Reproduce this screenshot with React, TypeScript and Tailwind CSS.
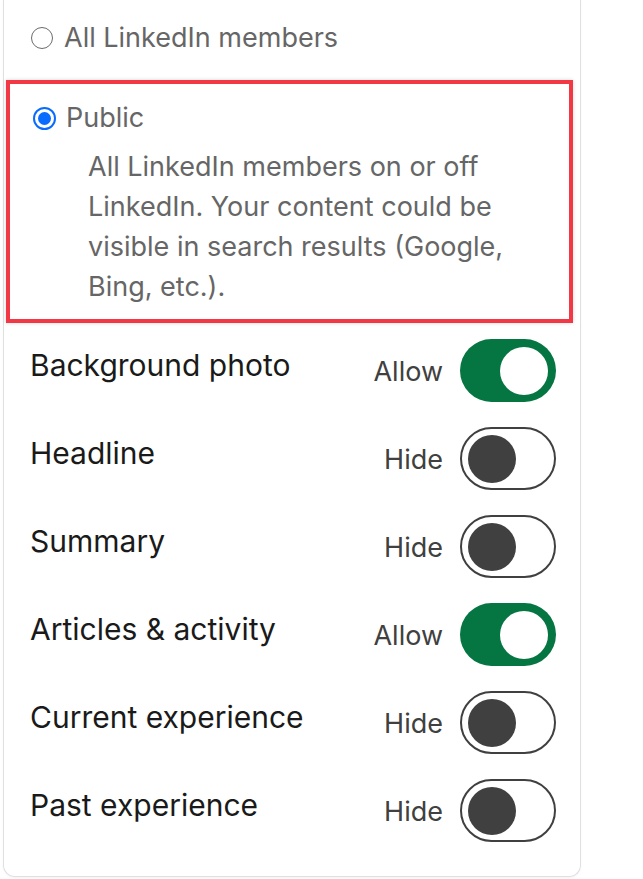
import React from "react";

type Row = { label: string; on: boolean };

const rows: Row[] = [
  { label: "Background photo", on: true },
  { label: "Headline", on: false },
  { label: "Summary", on: false },
  { label: "Articles & activity", on: true },
  { label: "Current experience", on: false },
  { label: "Past experience", on: false },
];

const Toggle: React.FC<{ on: boolean }> = ({ on }) =>
  on ? (
    <div className="flex h-[63px] w-[96px] items-center justify-end rounded-full bg-[#057642] pr-[8px]">
      <div className="h-[48px] w-[48px] rounded-full bg-white" />
    </div>
  ) : (
    <div className="flex h-[63px] w-[96px] items-center rounded-full border-2 border-[#404040] bg-white pl-[6px]">
      <div className="h-[48px] w-[48px] rounded-full bg-[#404040]" />
    </div>
  );

const App: React.FC = () => {
  return (
    <div className="min-h-screen bg-white font-['Inter',sans-serif]">
      <div className="ml-[3px] w-[578px] rounded-b-xl border-x border-b border-[#e0e0e0] pb-[34px] shadow-[0_1px_2px_rgba(0,0,0,0.05)]">
        {/* visibility options */}
        <div className="flex h-[80px] items-center gap-[11px] pb-[4px] pl-[27px]">
          <span className="h-[22px] w-[22px] rounded-full border-[1.5px] border-[#6b6b6b]" />
          <span className="text-[27px] leading-[40px] text-[#666666]">All LinkedIn members</span>
        </div>

        <div className="ml-[2px] w-[567px] border-4 border-[#f23845] pb-[12px] pt-[14px] shadow-[0_0_4px_rgba(0,0,0,0.15)]">
          <div className="flex items-center gap-[10px] pl-[23px]">
            <span className="flex h-[23px] w-[23px] items-center justify-center rounded-full border-2 border-[#0a6cff]">
              <span className="h-[13px] w-[13px] rounded-full bg-[#0a6cff]" />
            </span>
            <span className="text-[27px] leading-[40px] text-[#666666]">Public</span>
          </div>
          <p className="mt-[9px] pl-[78px] pr-[50px] text-[27px] leading-[40px] text-[#666666]">
            All LinkedIn members on or off LinkedIn. Your content could be visible in search results (Google, Bing, etc.).
          </p>
        </div>

        {/* section toggles */}
        <div className="mt-[16px] flex flex-col gap-[25px] pl-[26px] pr-[24px]">
          {rows.map((r) => (
            <div key={r.label} className="flex items-center justify-between">
              <span className="pb-[12px] text-[30px] leading-[40px] text-[#1a1a1a]">{r.label}</span>
              <div className="flex items-center gap-[17px]">
                <span className="pt-[4px] text-[27px] text-[#404040]">{r.on ? "Allow" : "Hide"}</span>
                <Toggle on={r.on} />
              </div>
            </div>
          ))}
        </div>
      </div>
    </div>
  );
};

export default App;
